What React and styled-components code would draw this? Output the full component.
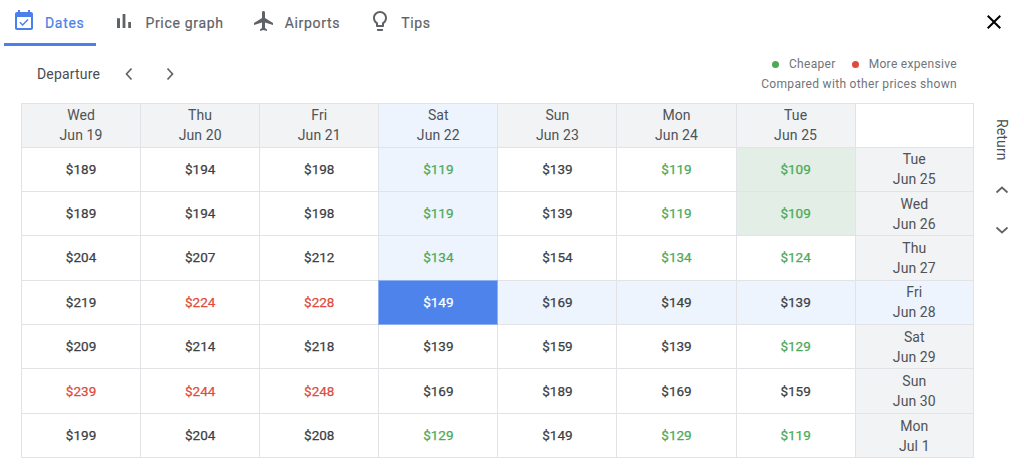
import React from "react";
import styled, { createGlobalStyle } from "styled-components";

const Global = createGlobalStyle`
  html, body { margin: 0; padding: 0; background: #fff; }
  body { font-family: Roboto, "Liberation Sans", sans-serif; color: #3c4043; }
`;

const Page = styled.div`
  width: 1024px;
  height: 475px;
  overflow: hidden;
  display: flex;
  flex-direction: column;
`;
const TopBar = styled.div`
  display: flex;
  height: 46px;
  padding: 0 18px 0 4px;
  justify-content: space-between;
`;
const Tabs = styled.nav`
  display: flex;
  gap: 8px;
`;
const Tab = styled.div`
  display: flex;
  align-items: center;
  gap: 9px;
  padding: 2px 12px 0 8px;
  box-sizing: border-box;
  height: 46px;
  font-size: 14px;
  font-weight: 400;
  letter-spacing: 0.68px;
  -webkit-text-stroke: 0.2px currentColor;
  color: ${(p) => (p.$active ? "#4a80ec" : "#5f6368")};
  border-bottom: 3px solid ${(p) => (p.$active ? "#4a80ec" : "transparent")};
`;
const Icon = styled.svg`
  width: 24px;
  height: 24px;
  flex: none;
  fill: currentColor;
  margin-top: -3px;
`;
const CloseBtn = styled.div`
  width: 24px;
  height: 24px;
  margin-top: 10px;
  color: #000;
  svg { display: block; width: 24px; height: 24px; fill: currentColor; }
`;
const ToolRow = styled.div`
  height: 57px;
  display: flex;
  justify-content: space-between;
  padding: 0 67px 0 37px;
`;
const Nav = styled.div`
  display: flex;
  align-items: center;
  gap: 17px;
  height: 56px;
  font-size: 14px;
  letter-spacing: 0.17px;
  color: #4a4d51;
`;
const Chevron = styled.svg`
  width: 24px;
  height: 24px;
  flex: none;
  fill: none;
  stroke: #5f6368;
  stroke-width: 1.7;
`;
const Legend = styled.div`
  padding-top: 8px;
  font-size: 12px;
  line-height: 20px;
  letter-spacing: 0.32px;
  color: #70757a;
  text-align: right;
`;
const LegendRow = styled.div`
  display: flex;
  justify-content: flex-end;
  align-items: center;
  gap: 16px;
`;
const LegendItem = styled.span`
  display: inline-flex;
  align-items: center;
  gap: 10px;
`;
const Dot = styled.i`
  width: 7px;
  height: 7px;
  border-radius: 50%;
  background: ${(p) => p.$color};
`;
const Main = styled.div`
  display: flex;
  padding-left: 21px;
`;
const Grid = styled.div`
  display: grid;
  grid-template-columns: repeat(7, 118.1px) 117.3px;
  grid-template-rows: 42.5px repeat(7, 43.4px);
  gap: 1px;
  padding: 1px;
  background: #e1e3e7;
`;
const Head = styled.div`
  display: flex;
  flex-direction: column;
  align-items: center;
  justify-content: center;
  font-size: 14px;
  line-height: 20px;
  letter-spacing: 0.1px;
  color: #4f5256;
  background: ${(p) => (p.$hl ? "#edf4fd" : "#f1f3f4")};
`;
const Blank = styled.div`
  background: #fff;
`;
const colors = { g: "#4caa57", r: "#e04b3c", n: "#3c4043" };
const bgFor = (p) =>
  p.$sel ? "#4f83ec" : p.$bg === "g" ? "#e2eee6" : p.$hl ? "#edf4fd" : "#fff";
const Cell = styled.div`
  display: flex;
  align-items: center;
  justify-content: center;
  padding-bottom: 1px;
  font-size: 13.5px;
  font-weight: 400;
  letter-spacing: 0;
  -webkit-text-stroke: 0.25px currentColor;
  color: ${(p) => (p.$sel ? "#fff" : colors[p.$tone])};
  background: ${bgFor};
  ${(p) => (p.$sel ? "box-shadow: 0 0 0 1px #8eb0f2;" : "")}
`;
const Side = styled.div`
  width: 50px;
  display: flex;
  flex-direction: column;
  align-items: center;
  padding: 16px 0 0 6px;
  box-sizing: border-box;
  gap: 16px;
`;
const Vertical = styled.div`
  writing-mode: vertical-rl;
  font-size: 14px;
  line-height: 20px;
  height: 42px;
  letter-spacing: 0.15px;
  color: #4a4d51;
  margin-bottom: 1px;
`;

const cols = [
  ["Wed", "Jun 19"], ["Thu", "Jun 20"], ["Fri", "Jun 21"], ["Sat", "Jun 22"],
  ["Sun", "Jun 23"], ["Mon", "Jun 24"], ["Tue", "Jun 25"],
];
const rowsHead = [
  ["Tue", "Jun 25"], ["Wed", "Jun 26"], ["Thu", "Jun 27"], ["Fri", "Jun 28"],
  ["Sat", "Jun 29"], ["Sun", "Jun 30"], ["Mon", "Jul 1"],
];
const data = [
  ["189n", "194n", "198n", "119g", "139n", "119g", "109g"],
  ["189n", "194n", "198n", "119g", "139n", "119g", "109g"],
  ["204n", "207n", "212n", "134g", "154n", "134g", "124g"],
  ["219n", "224r", "228r", "149n", "169n", "149n", "139n"],
  ["209n", "214n", "218n", "139n", "159n", "139n", "129g"],
  ["239r", "244r", "248r", "169n", "189n", "169n", "159n"],
  ["199n", "204n", "208n", "129g", "149n", "129g", "119g"],
];

const P = {
  cal: "M16.53 11.06L15.47 10l-4.88 4.88-2.12-2.12-1.06 1.06L10.59 17l5.94-5.94zM19 3h-1V1h-2v2H8V1H6v2H5c-1.11 0-1.99.9-1.99 2L3 19c0 1.1.89 2 2 2h14c1.1 0 2-.9 2-2V5c0-1.1-.9-2-2-2zm0 16H5V8h14v11z",
  bar: "M5 9.2h3V19H5zM10.6 5h2.8v14h-2.8zm5.6 8H19v6h-2.8z",
  plane: "M21 16v-2l-8-5V3.5c0-.83-.67-1.5-1.5-1.5S10 2.67 10 3.5V9l-8 5v2l8-2.5V19l-2 1.5V22l3.5-1 3.5 1v-1.5L13 19v-5.5l8 2.5z",
  bulb: "M9 21c0 .55.45 1 1 1h4c.55 0 1-.45 1-1v-1H9v1zm3-19C8.14 2 5 5.14 5 9c0 2.38 1.19 4.47 3 5.74V17c0 .55.45 1 1 1h6c.55 0 1-.45 1-1v-2.26c1.81-1.27 3-3.36 3-5.74 0-3.86-3.14-7-7-7zm2.85 11.1l-.85.6V16h-4v-2.3l-.85-.6C7.8 12.16 7 10.63 7 9c0-2.76 2.24-5 5-5s5 2.24 5 5c0 1.63-.8 3.16-2.15 4.1z",
  close: "M19 6.41L17.59 5 12 10.59 6.41 5 5 6.41 10.59 12 5 17.59 6.41 19 12 13.41 17.59 19 19 17.59 13.41 12z",
};
const tabs = [
  ["Dates", P.cal, true], ["Price graph", P.bar], ["Airports", P.plane], ["Tips", P.bulb],
];
const chevrons = {
  left: "M14.500 6.500 9.500 12l5 5.500",
  right: "M9.500 6.500 14.500 12l-5 5.500",
  up: "M6.500 14.500 12 9.500l5.500 5",
  down: "M6.500 9.500 12 14.500l5.500-5",
};
const Chev = ({ dir }) => (
  <Chevron viewBox="0 0 24 24"><path d={chevrons[dir]} /></Chevron>
);
const DateLabel = ({ d, hl }) => (
  <Head $hl={hl}><span>{d[0]}</span><span>{d[1]}</span></Head>
);

export default function App() {
  return (
    <Page>
      <Global />
      <TopBar>
        <Tabs>
          {tabs.map(([label, d, active]) => (
            <Tab key={label} $active={active}>
              <Icon viewBox="0 0 24 24"><path d={d} /></Icon>
              {label}
            </Tab>
          ))}
        </Tabs>
        <CloseBtn>
          <svg viewBox="0 0 24 24"><path d={P.close} /></svg>
        </CloseBtn>
      </TopBar>
      <ToolRow>
        <Nav>
          Departure
          <Chev dir="left" />
          <Chev dir="right" />
        </Nav>
        <Legend>
          <LegendRow>
            <LegendItem><Dot $color="#4caa57" />Cheaper</LegendItem>
            <LegendItem><Dot $color="#e04b3c" />More expensive</LegendItem>
          </LegendRow>
          <div>Compared with other prices shown</div>
        </Legend>
      </ToolRow>
      <Main>
        <Grid>
          {cols.map((c, i) => <DateLabel key={c[1]} d={c} hl={i === 3} />)}
          <Blank />
          {data.map((row, r) => (
            <React.Fragment key={rowsHead[r][1]}>
              {row.map((v, c) => {
                const sel = r === 3 && c === 3;
                const hl = (c === 3 && r < 3) || (r === 3 && c > 3);
                const green = c === 6 && r < 2;
                return (
                  <Cell key={c} $tone={v[3]} $sel={sel} $hl={hl} $bg={green ? "g" : undefined}>
                    ${v.slice(0, 3)}
                  </Cell>
                );
              })}
              <DateLabel d={rowsHead[r]} hl={r === 3} />
            </React.Fragment>
          ))}
        </Grid>
        <Side>
          <Vertical>Return</Vertical>
          <Chev dir="up" />
          <Chev dir="down" />
        </Side>
      </Main>
    </Page>
  );
}
